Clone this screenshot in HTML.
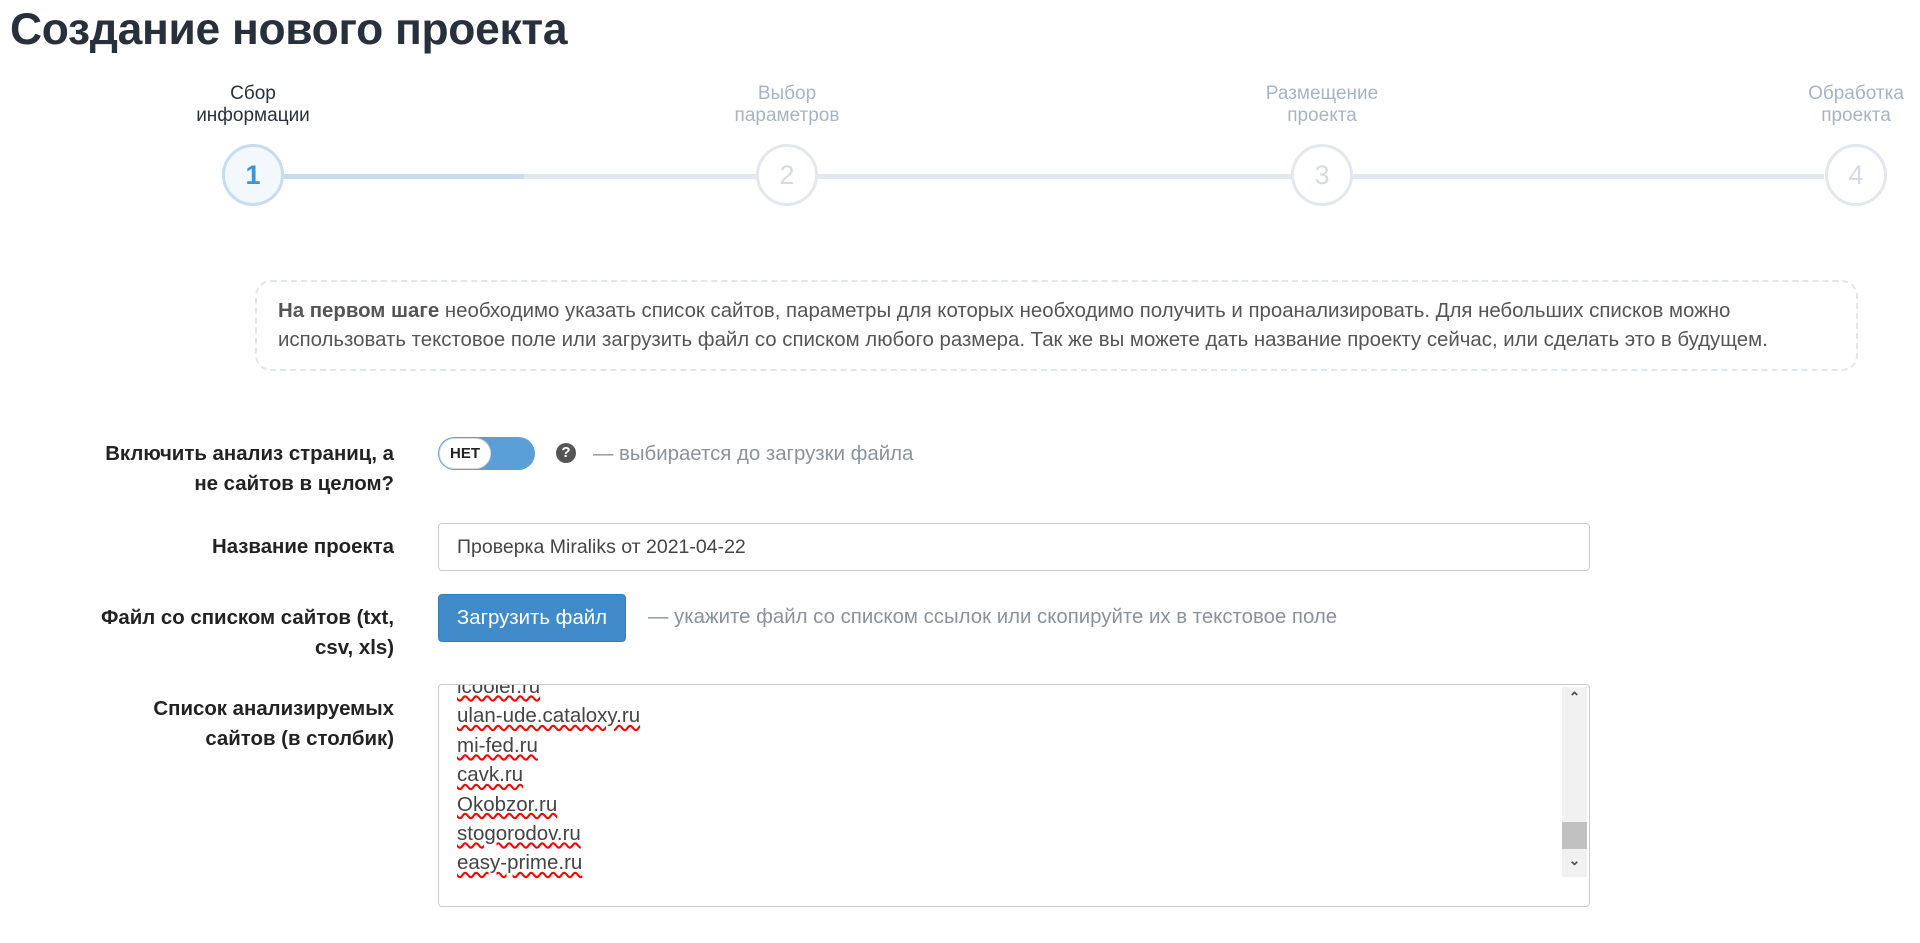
<!DOCTYPE html>
<html><head><meta charset="utf-8"><style>
*{box-sizing:border-box;margin:0;padding:0}
body{width:1920px;height:943px;background:#fff;font-family:"Liberation Sans",Arial,sans-serif;position:relative;overflow:hidden;color:#333}
.abs{position:absolute}
h1{position:absolute;left:10px;top:5px;font-size:44.4px;font-weight:bold;color:#28313b;letter-spacing:-0.3px}
.step{position:absolute;width:200px;text-align:center;font-size:19px;line-height:22px;color:#a9b4c2}
.circ{position:absolute;width:62px;height:62px;border-radius:50%;border:3px solid #e3e7ee;background:#fff;text-align:center;line-height:56px;font-size:27px;color:#d5dbe3}
.lbl{position:absolute;right:1526px;text-align:right;font-weight:bold;font-size:20.4px;line-height:30px;color:#222;white-space:nowrap}
.hint{position:absolute;font-size:20.4px;color:#8a929a;white-space:nowrap}
</style></head><body>
<h1>Создание нового проекта</h1>
<div class="abs" style="left:284px;top:174px;width:1540px;height:5px;background:#e3e7ee"></div>
<div class="abs" style="left:284px;top:174px;width:240px;height:5px;background:#c7dcee"></div>
<div class="step" style="left:153px;top:83px;color:#28313b">Сбор<br>информации</div>
<div class="step" style="left:687px;top:83px">Выбор<br>параметров</div>
<div class="step" style="left:1222px;top:83px">Размещение<br>проекта</div>
<div class="step" style="left:1756px;top:83px">Обработка<br>проекта</div>
<div class="circ" style="left:222px;top:144px;border-color:#c7dcee;background:#f3f8fc;color:#3a93d8;font-weight:bold">1</div>
<div class="circ" style="left:756px;top:144px">2</div>
<div class="circ" style="left:1291px;top:144px">3</div>
<div class="circ" style="left:1825px;top:144px">4</div>
<div class="abs" style="left:255px;top:280px;width:1603px;height:91px;border:2px dashed #e2e5e9;border-radius:16px;padding:15px 0 0 21px;font-size:20.4px;line-height:29px;color:#555;white-space:nowrap">
<b>На первом шаге</b> необходимо указать список сайтов, параметры для которых необходимо получить и проанализировать. Для небольших списков можно<br>использовать текстовое поле или загрузить файл со списком любого размера. Так же вы можете дать название проекту сейчас, или сделать это в будущем.</div>
<div class="lbl" style="top:439px">Включить анализ страниц, а<br>не сайтов в целом?</div>
<div class="abs" style="left:438px;top:437px;width:97px;height:33px;border-radius:17px;background:#5b9fd9;"></div>
<div class="abs" style="left:439px;top:438px;width:52px;height:31px;border-radius:16px;background:#fff;border:1px solid #ddd;font-size:15px;font-weight:bold;line-height:29px;text-align:center;color:#222">НЕТ</div>
<div class="abs" style="left:556px;top:443px;width:20px;height:20px;border-radius:50%;background:#555;color:#fff;font-size:15px;font-weight:bold;text-align:center;line-height:20px">?</div>
<div class="hint" style="left:593px;top:443px">— выбирается до загрузки файла</div>
<div class="lbl" style="top:532px">Название проекта</div>
<div class="abs" style="left:438px;top:523px;width:1152px;height:48px;border:1px solid #ccc;border-radius:4px;padding-left:18px;line-height:46px;font-size:19.5px;color:#444">Проверка Miraliks от 2021-04-22</div>
<div class="lbl" style="top:603px">Файл со списком сайтов (txt,<br>csv, xls)</div>
<div class="abs" style="left:438px;top:594px;width:188px;height:48px;background:#428bca;border:1px solid #357ebd;border-radius:4px;color:#fff;font-size:20.4px;line-height:46px;text-align:center">Загрузить файл</div>
<div class="hint" style="left:648px;top:606px">— укажите файл со списком ссылок или скопируйте их в текстовое поле</div>
<div class="lbl" style="top:694px">Список анализируемых<br>сайтов (в столбик)</div>
<div class="abs" style="left:438px;top:684px;width:1152px;height:223px;border:1px solid #ccc;border-radius:4px;overflow:hidden">
<div class="abs" style="left:18px;top:-13px;font-size:20.5px;line-height:29.4px;color:#444">
<div><u style="text-decoration:underline wavy red">icooler.ru</u></div>
<div><u style="text-decoration:underline wavy red">ulan-ude.cataloxy.ru</u></div>
<div><u style="text-decoration:underline wavy red">mi-fed.ru</u></div>
<div><u style="text-decoration:underline wavy red">cavk.ru</u></div>
<div><u style="text-decoration:underline wavy red">Okobzor.ru</u></div>
<div><u style="text-decoration:underline wavy red">stogorodov.ru</u></div>
<div><u style="text-decoration:underline wavy red">easy-prime.ru</u></div>
</div>
<div class="abs" style="left:1123px;top:2px;width:25px;height:190px;background:#f1f1f1"></div>
<div class="abs" style="left:1123px;top:137px;width:25px;height:27px;background:#c1c1c1"></div>
<div class="abs" style="left:1123px;top:4px;width:25px;text-align:center;font-size:14px;color:#505050;font-weight:bold">&#8963;</div>
<div class="abs" style="left:1123px;top:167px;width:25px;text-align:center;font-size:14px;color:#505050;font-weight:bold">&#8964;</div>
</div>
</body></html>
